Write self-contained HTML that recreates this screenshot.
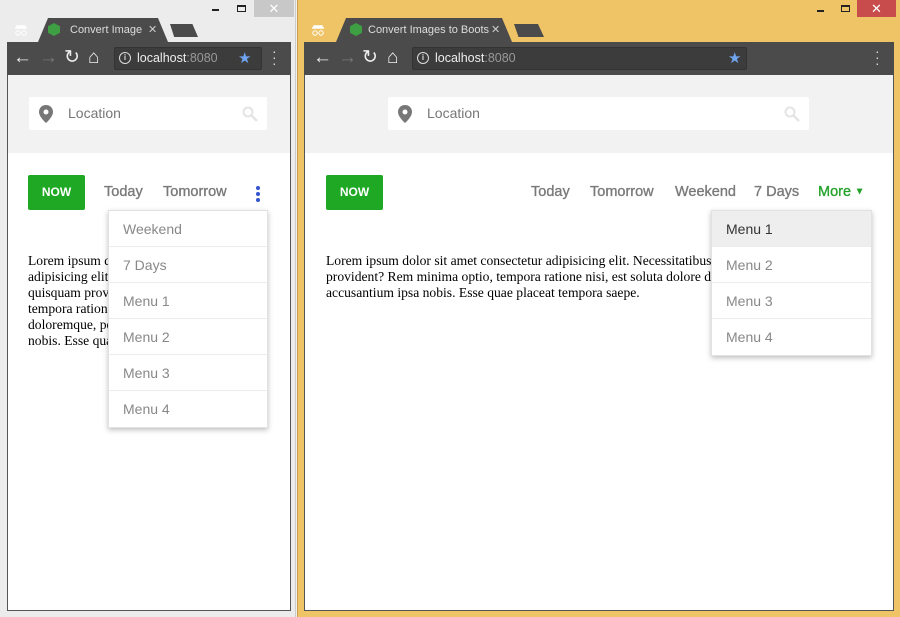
<!DOCTYPE html>
<html><head><meta charset="utf-8"><style>
*{margin:0;padding:0;box-sizing:border-box}
body{width:900px;height:617px;position:relative;overflow:hidden;background:#f0f0f0;font-family:"Liberation Sans",sans-serif}
.a{position:absolute}
.nav{position:absolute;top:184px;font-size:14.5px;color:#7a7a7a;-webkit-text-stroke:0.35px #7a7a7a}
.dd{position:absolute;background:#fff;box-shadow:0 2px 5px rgba(0,0,0,.25);border:1px solid #e2e2e2}
.dd div{height:36px;line-height:36px;padding-left:14px;font-size:14px;color:#888;border-bottom:1px solid #ececec}
.dd div:last-child{border-bottom:none}
.now{position:absolute;top:175px;width:57px;height:35px;background:#1fa824;color:#fff;font-weight:bold;font-size:12px;text-align:center;line-height:35px;border-radius:2px}
.lorem{position:absolute;font-family:"Liberation Serif",serif;font-size:13.6px;line-height:16px;color:#000;white-space:nowrap;overflow:hidden}
.tb{position:absolute;top:42px;height:33px;background:#4b4b4b}
.addr{position:absolute;top:47px;height:23px;background:#3c3c3c;border:1px solid #333;border-radius:2px;color:#eee;font-size:12.5px;line-height:21px;padding-left:22px}
.addr span{color:#999}
.search{position:absolute;top:97px;height:33px;background:#fff;border-radius:2px;font-size:14px;color:#777;line-height:33px;padding-left:39px}
.tab{position:absolute;top:18px;height:24px;background:#4b4b4b;clip-path:polygon(0 100%,10px 0,calc(100% - 10px) 0,100% 100%);color:#ddd;font-size:11px;line-height:24px;padding-left:32px;white-space:nowrap;overflow:hidden}
.ic{position:absolute;top:44px;font-size:19px;line-height:28px}
</style></head><body>
<!-- LEFT WINDOW -->
<div class="a" style="left:0;top:0;width:296px;height:617px;background:#ececec;border-right:1px solid #ccc"></div>
<div class="a" style="left:254px;top:0;width:40px;height:17px;background:#c8c8c8;color:#fff;text-align:center;font-size:13px;line-height:17px">✕</div>
<div class="a" style="left:212px;top:9px;width:7px;height:2px;background:#222"></div>
<div class="a" style="left:237px;top:5px;width:9px;height:7px;border:1px solid #222;border-top-width:2px"></div>
<svg class="a" style="left:14px;top:22px" width="14" height="14"><path d="M3 4h8v2H3z M1 6h12" stroke="#fff" stroke-width="1.5" fill="#fff"/><circle cx="4" cy="11" r="2.2" stroke="#fff" fill="none"/><circle cx="10" cy="11" r="2.2" stroke="#fff" fill="none"/></svg>
<div class="tab" style="left:38px;width:130px">Convert Image<span style="position:absolute;left:110px;color:#ccc">✕</span></div>
<div class="a" style="left:48px;top:23px;width:12px;height:13px;background:#3fa043;clip-path:polygon(50% 0,100% 25%,100% 75%,50% 100%,0 75%,0 25%)"></div>
<div class="a" style="left:170px;top:24px;width:28px;height:13px;background:#4b4b4b;clip-path:polygon(0 0,80% 0,100% 100%,15% 100%)"></div>
<div class="tb" style="left:7px;width:284px"></div>
<div class="ic" style="left:13px;color:#eee">←</div>
<div class="ic" style="left:39px;color:#777">→</div>
<div class="ic" style="left:64px;color:#eee">↻</div>
<div class="ic" style="left:88px;color:#eee">⌂</div>
<div class="addr" style="left:114px;width:148px">localhost<span>:8080</span></div>
<div class="a" style="left:119px;top:52px;width:12px;height:12px;border:1.5px solid #ddd;border-radius:50%;font-size:8px;color:#ddd;text-align:center;line-height:9px;font-weight:bold">i</div>
<div class="a" style="left:238px;top:49px;color:#6fa4f0;font-size:15px">★</div>
<div class="a" style="left:272px;top:48px;color:#ddd;font-size:14px;line-height:6px">·<br>·<br>·</div>
<div class="a" style="left:7px;top:75px;width:284px;height:536px;background:#fff;border:1px solid #555;border-top:none"></div>
<div class="a" style="left:8px;top:75px;width:282px;height:78px;background:#f2f2f2"></div>
<div class="search" style="left:29px;width:238px">Location</div>
<svg class="a" style="left:39px;top:105px" width="14" height="18" viewBox="0 0 14 18"><path d="M7 0C3 0 0 3 0 7c0 5 7 11 7 11s7-6 7-11c0-4-3-7-7-7z" fill="#777"/><circle cx="7" cy="7" r="2.5" fill="#fff"/></svg>
<svg class="a" style="left:242px;top:106px" width="16" height="16"><circle cx="6" cy="6" r="4.5" fill="none" stroke="#e4e4e4" stroke-width="2"/><path d="M9 9l6 6" stroke="#e4e4e4" stroke-width="2.5"/></svg>
<div class="now" style="left:28px">NOW</div>
<div class="nav" style="left:104px">Today</div>
<div class="nav" style="left:163px">Tomorrow</div>
<div class="a" style="left:256px;top:186px;width:4px;height:4px;border-radius:50%;background:#3355cc;box-shadow:0 6px 0 #3355cc,0 12px 0 #3355cc"></div>
<div class="lorem" style="left:28px;top:253px;width:240px">Lorem ipsum dolor sit amet consectetur<br>adipisicing elit. Necessitatibus<br>quisquam provident? Rem minima optio,<br>tempora ratione nisi, est soluta dolore<br>doloremque, perspiciatis accusantium<br>nobis. Esse quae placeat tempora saepe.</div>
<div class="dd" style="left:108px;top:210px;width:160px"><div>Weekend</div><div>7 Days</div><div>Menu 1</div><div>Menu 2</div><div>Menu 3</div><div>Menu 4</div></div>

<!-- RIGHT WINDOW -->
<div class="a" style="left:297px;top:0;width:603px;height:617px;background:#efc466;border-left:1px solid #c9a050"></div>
<div class="a" style="left:857px;top:0;width:39px;height:17px;background:#c94c4c;color:#fff;text-align:center;font-size:13px;line-height:17px">✕</div>
<div class="a" style="left:817px;top:10px;width:7px;height:2px;background:#222"></div>
<div class="a" style="left:841px;top:5px;width:9px;height:7px;border:1px solid #222;border-top-width:2px"></div>
<svg class="a" style="left:311px;top:22px" width="14" height="14"><path d="M3 4h8v2H3z M1 6h12" stroke="#fff" stroke-width="1.5" fill="#fff"/><circle cx="4" cy="11" r="2.2" stroke="#fff" fill="none"/><circle cx="10" cy="11" r="2.2" stroke="#fff" fill="none"/></svg>
<div class="tab" style="left:336px;width:176px">Convert Images to Boots<span style="position:absolute;left:155px;color:#ccc">✕</span></div>
<div class="a" style="left:350px;top:23px;width:12px;height:13px;background:#3fa043;clip-path:polygon(50% 0,100% 25%,100% 75%,50% 100%,0 75%,0 25%)"></div>
<div class="a" style="left:514px;top:24px;width:30px;height:13px;background:#4b4b4b;clip-path:polygon(0 0,80% 0,100% 100%,15% 100%)"></div>
<div class="tb" style="left:304px;width:590px"></div>
<div class="ic" style="left:313px;color:#eee">←</div>
<div class="ic" style="left:338px;color:#777">→</div>
<div class="ic" style="left:362px;color:#eee">↻</div>
<div class="ic" style="left:387px;color:#eee">⌂</div>
<div class="addr" style="left:412px;width:335px">localhost<span>:8080</span></div>
<div class="a" style="left:417px;top:52px;width:12px;height:12px;border:1.5px solid #ddd;border-radius:50%;font-size:8px;color:#ddd;text-align:center;line-height:9px;font-weight:bold">i</div>
<div class="a" style="left:728px;top:49px;color:#6fa4f0;font-size:15px">★</div>
<div class="a" style="left:875px;top:48px;color:#ddd;font-size:14px;line-height:6px">·<br>·<br>·</div>
<div class="a" style="left:304px;top:75px;width:590px;height:536px;background:#fff;border:1px solid #555;border-top:none"></div>
<div class="a" style="left:305px;top:75px;width:588px;height:78px;background:#f2f2f2"></div>
<div class="search" style="left:388px;width:421px">Location</div>
<svg class="a" style="left:398px;top:105px" width="14" height="18" viewBox="0 0 14 18"><path d="M7 0C3 0 0 3 0 7c0 5 7 11 7 11s7-6 7-11c0-4-3-7-7-7z" fill="#777"/><circle cx="7" cy="7" r="2.5" fill="#fff"/></svg>
<svg class="a" style="left:784px;top:106px" width="16" height="16"><circle cx="6" cy="6" r="4.5" fill="none" stroke="#e4e4e4" stroke-width="2"/><path d="M9 9l6 6" stroke="#e4e4e4" stroke-width="2.5"/></svg>
<div class="now" style="left:326px">NOW</div>
<div class="nav" style="left:531px">Today</div>
<div class="nav" style="left:590px">Tomorrow</div>
<div class="nav" style="left:675px">Weekend</div>
<div class="nav" style="left:754px">7 Days</div>
<div class="nav" style="left:818px;color:#22a228;-webkit-text-stroke:0.35px #22a228">More <span style="font-size:9px;position:relative;top:-2px">▼</span></div>
<div class="lorem" style="left:326px;top:253px;width:560px">Lorem ipsum dolor sit amet consectetur adipisicing elit. Necessitatibus quisquam<br>provident? Rem minima optio, tempora ratione nisi, est soluta dolore doloremque,<br>accusantium ipsa nobis. Esse quae placeat tempora saepe.</div>
<div class="dd" style="left:711px;top:210px;width:161px"><div style="background:#eee;color:#333">Menu 1</div><div>Menu 2</div><div>Menu 3</div><div>Menu 4</div></div>
</body></html>
